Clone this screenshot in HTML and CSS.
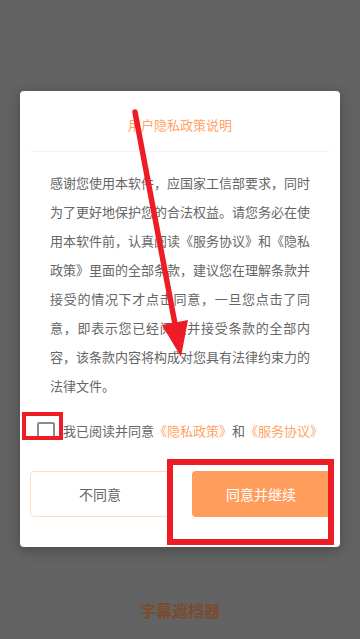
FILE: index.html
```html
<!DOCTYPE html>
<html lang="zh-CN">
<head>
<meta charset="utf-8">
<meta name="viewport" content="width=360">
<link rel="stylesheet" href="styles.css">
</head>
<body>
<div class="screen">
  <div class="dialog">
    <div class="dialog-head">
      <div class="dialog-title">用户隐私政策说明</div>
    </div>
    <p class="dialog-text">感谢您使用本软件，应国家工信部要求，同时为了更好地保护您的合法权益。请您务必在使用本软件前，认真阅读《服务协议》和《隐私政策》里面的全部条款，建议您在理解条款并接受的情况下才点击同意，一旦您点击了同意，即表示您已经阅读并接受条款的全部内容，该条款内容将构成对您具有法律约束力的法律文件。</p>
    <label class="agree-row">
      <span class="checkbox"></span>
      <span class="agree-text">我已阅读并同意<span class="link">《隐私政策》</span>和<span class="link">《服务协议》</span></span>
    </label>
    <div class="btn-row">
      <div class="btn btn-outline">不同意</div>
      <div class="btn btn-fill">同意并继续</div>
    </div>
  </div>
  <div class="app-name">字幕遮挡器</div>

  <div class="mark mark-check"></div>
  <div class="mark mark-btn"></div>
  <svg class="arrow" width="360" height="639" viewBox="0 0 360 639">
    <line x1="135" y1="112" x2="175" y2="324" stroke="#ee1c25" stroke-width="5.5" stroke-linecap="round"/>
    <polygon points="162,325 188,320 181,357" fill="#ee1c25"/>
  </svg>
</div>
</body>
</html>
```

FILE: styles.css
```css
* { box-sizing: border-box; }
html, body {
  margin: 0;
  padding: 0;
}
body {
  font-family: "Noto Sans CJK SC", "Noto Sans", sans-serif;
  background: #636363;
}
.screen {
  position: relative;
  width: 360px;
  height: 639px;
  overflow: hidden;
  background: #636363;
  padding-top: 91px;
}
.dialog {
  margin: 0 20px;
  width: 320px;
  height: 456px;
  background: #ffffff;
  border-radius: 4px;
  box-shadow: 0 3px 14px rgba(0, 0, 0, 0.28);
  display: flex;
  flex-direction: column;
}
.dialog-head {
  margin: 0 10px;
  height: 61px;
  padding-top: 24px;
  border-bottom: 1px solid #f3f3f3;
}
.dialog-title {
  text-align: center;
  font-size: 13px;
  line-height: 20px;
  color: #ffa466;
}
.dialog-text {
  margin: 0;
  padding: 16px 30px 0;
  font-size: 13px;
  line-height: 29px;
  color: #666666;
  text-align: justify;
}
.agree-row {
  display: flex;
  align-items: center;
  margin-top: 22px;
  padding-left: 17px;
  height: 18px;
}
.checkbox {
  width: 18px;
  height: 18px;
  border: 2px solid #8c8c8c;
  border-radius: 2px;
  flex: none;
}
.agree-text {
  margin-left: 8px;
  font-size: 13px;
  line-height: 18px;
  color: #666666;
  white-space: nowrap;
}
.link { color: #ffa466; }
.btn-row {
  display: flex;
  gap: 22px;
  padding: 0 10px;
  margin-top: 31px;
}
.btn {
  flex: 1;
  height: 46px;
  border-radius: 4px;
  display: flex;
  align-items: center;
  justify-content: center;
  font-size: 14px;
}
.btn-outline {
  border: 1px solid #ffdcc6;
  color: #666666;
}
.btn-fill {
  background: #ff9d5c;
  color: #ffffff;
}
.app-name {
  margin-top: 53px;
  text-align: center;
  font-size: 16px;
  line-height: 20px;
  font-weight: bold;
  color: #7c4a2c;
}
.mark {
  position: absolute;
  border-style: solid;
  border-color: #ee1c25;
}
.mark-check {
  left: 22px;
  top: 412px;
  width: 41px;
  height: 28px;
  border-width: 4px;
}
.mark-btn {
  left: 167px;
  top: 459px;
  width: 167px;
  height: 86px;
  border-width: 6px;
}
.arrow {
  position: absolute;
  left: 0;
  top: 0;
}
```
